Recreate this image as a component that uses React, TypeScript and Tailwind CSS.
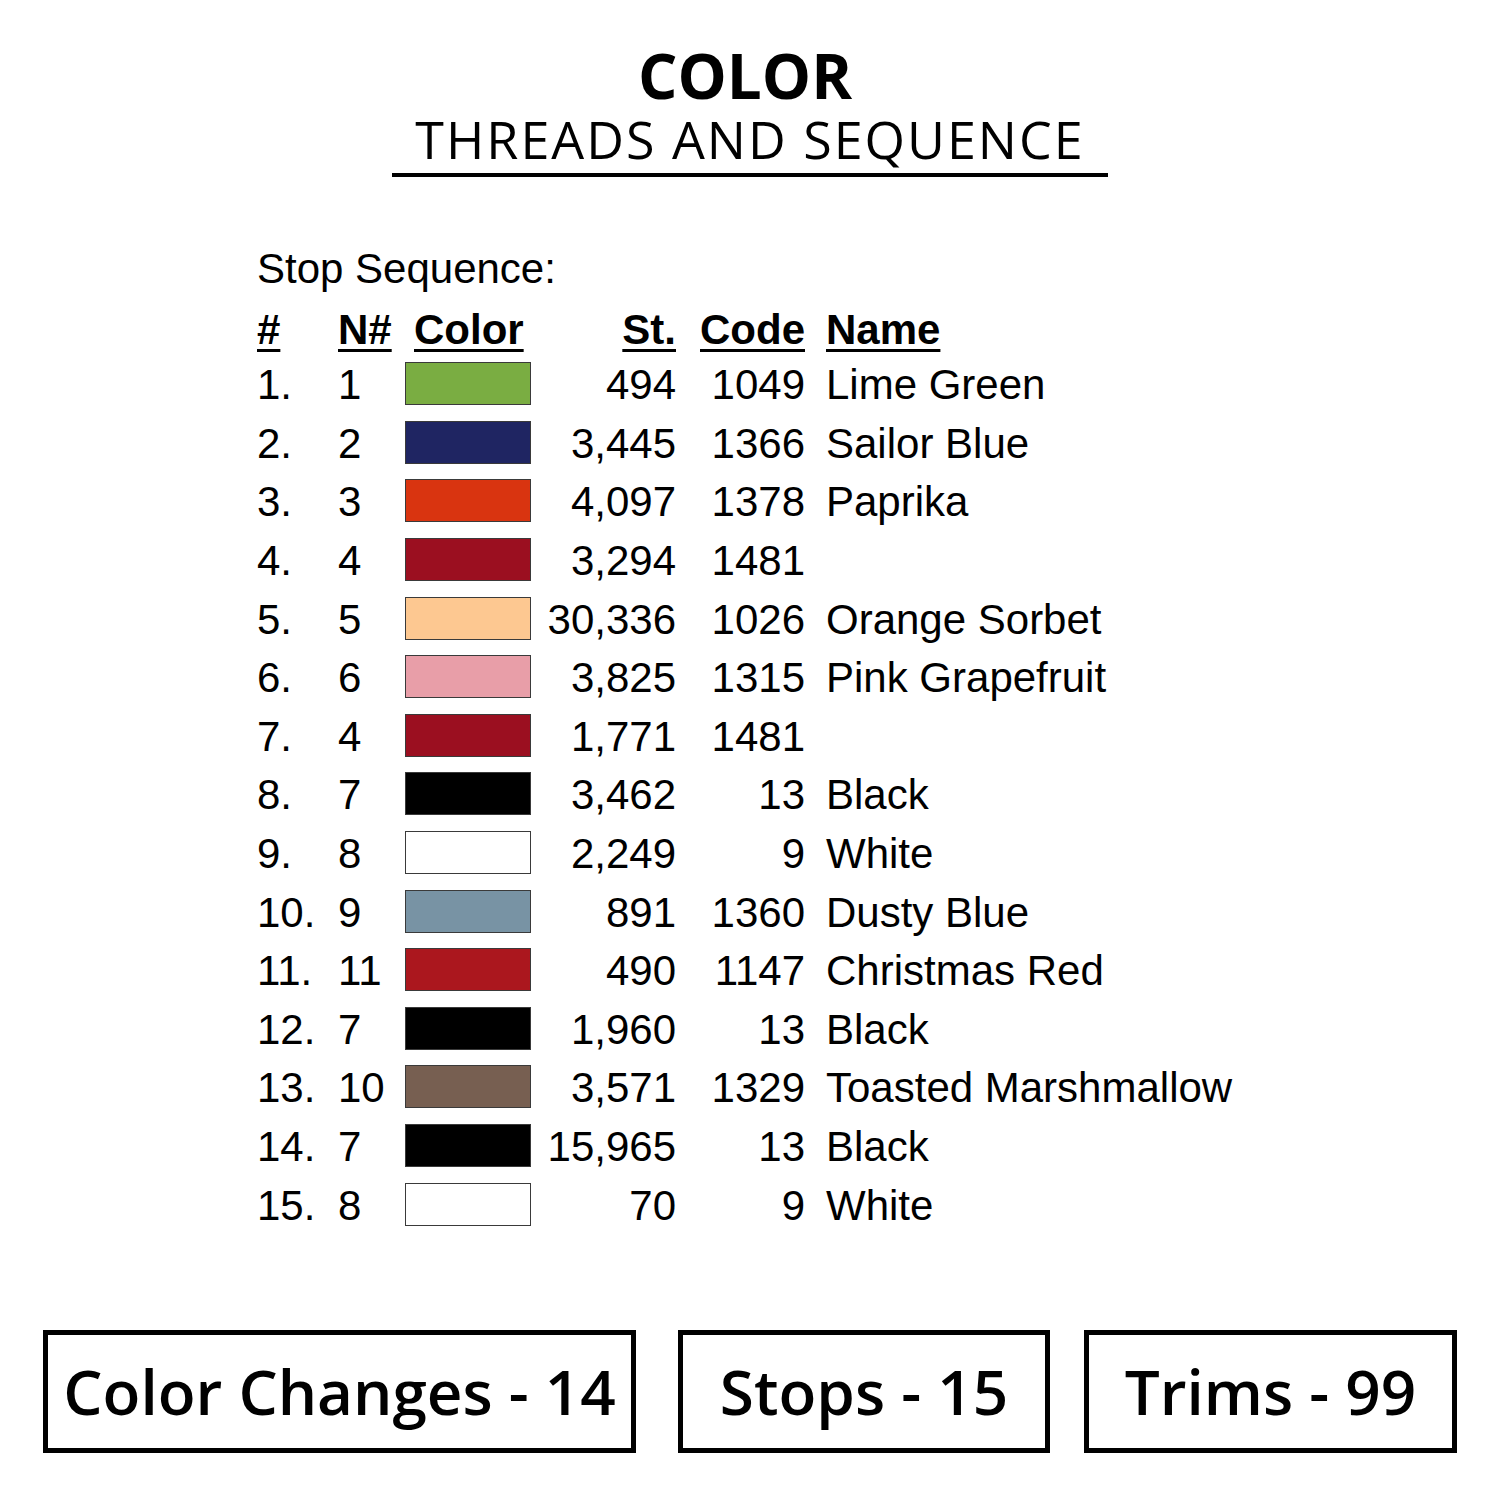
const threads = [
  { n: "1", color: "#7aad42", st: "494", code: "1049", name: "Lime Green" },
  { n: "2", color: "#1f2562", st: "3,445", code: "1366", name: "Sailor Blue" },
  { n: "3", color: "#d93410", st: "4,097", code: "1378", name: "Paprika" },
  { n: "4", color: "#9b0f20", st: "3,294", code: "1481", name: "" },
  { n: "5", color: "#fdc891", st: "30,336", code: "1026", name: "Orange Sorbet" },
  { n: "6", color: "#e89ea8", st: "3,825", code: "1315", name: "Pink Grapefruit" },
  { n: "4", color: "#9b0f20", st: "1,771", code: "1481", name: "" },
  { n: "7", color: "#000000", st: "3,462", code: "13", name: "Black" },
  { n: "8", color: "#ffffff", st: "2,249", code: "9", name: "White" },
  { n: "9", color: "#7893a4", st: "891", code: "1360", name: "Dusty Blue" },
  { n: "11", color: "#ab171e", st: "490", code: "1147", name: "Christmas Red" },
  { n: "7", color: "#000000", st: "1,960", code: "13", name: "Black" },
  { n: "10", color: "#775f51", st: "3,571", code: "1329", name: "Toasted Marshmallow" },
  { n: "7", color: "#000000", st: "15,965", code: "13", name: "Black" },
  { n: "8", color: "#ffffff", st: "70", code: "9", name: "White" },
];

const cols = "grid grid-cols-[81px_67px_126px_145px_129px_1fr]";
const ul = "underline decoration-[3px] underline-offset-[5px]";

export default function App() {
  return (
    <div className="w-[1500px] h-[1500px] bg-white text-black flex flex-col">
      <div className="flex flex-col items-center pt-[40px] font-['Open_Sans',sans-serif]">
        <div className="text-[62px] font-bold leading-[70px] -ml-[10px]">COLOR</div>
        <div className="text-[52px] leading-[58px] tracking-[2px]">THREADS AND SEQUENCE</div>
        <div className="w-[716px] h-[4px] bg-black mt-[5px]" />
      </div>

      <div className="pl-[257px] mt-[61px] font-['Liberation_Sans',Arial,sans-serif] text-[42px]">
        <div className="leading-[62px]">Stop Sequence:</div>
        <div className={`${cols} font-bold h-[56px] leading-[60px]`}>
          <span className={`${ul} justify-self-start`}>#</span>
          <span className={`${ul} justify-self-start`}>N#</span>
          <span className={`${ul} justify-self-start ml-[9px]`}>Color</span>
          <span className={`${ul} justify-self-end`}>St.</span>
          <span className={`${ul} justify-self-end`}>Code</span>
          <span className="pl-[21px]"><span className={ul}>Name</span></span>
        </div>
        {threads.map((t, i) => (
          <div key={i} className={`${cols} h-[58.6px] items-center leading-[58px]`}>
            <span>{i + 1}.</span>
            <span>{t.n}</span>
            <div className="w-[126px] h-[43px] -mt-[3px] border border-[#3a3a3a]" style={{ backgroundColor: t.color }} />
            <span className="text-right">{t.st}</span>
            <span className="text-right">{t.code}</span>
            <span className="pl-[21px] whitespace-nowrap">{t.name}</span>
          </div>
        ))}
      </div>

      <div className="mt-auto mb-[47px] pl-[43px] flex font-['Open_Sans',sans-serif] font-semibold text-[62px]">
        <div className="w-[593px] h-[123px] border-[5px] border-black flex items-center justify-center">Color Changes - 14</div>
        <div className="w-[372px] h-[123px] ml-[42px] border-[5px] border-black flex items-center justify-center">Stops - 15</div>
        <div className="w-[373px] h-[123px] ml-[34px] border-[5px] border-black flex items-center justify-center">Trims - 99</div>
      </div>
    </div>
  );
}
